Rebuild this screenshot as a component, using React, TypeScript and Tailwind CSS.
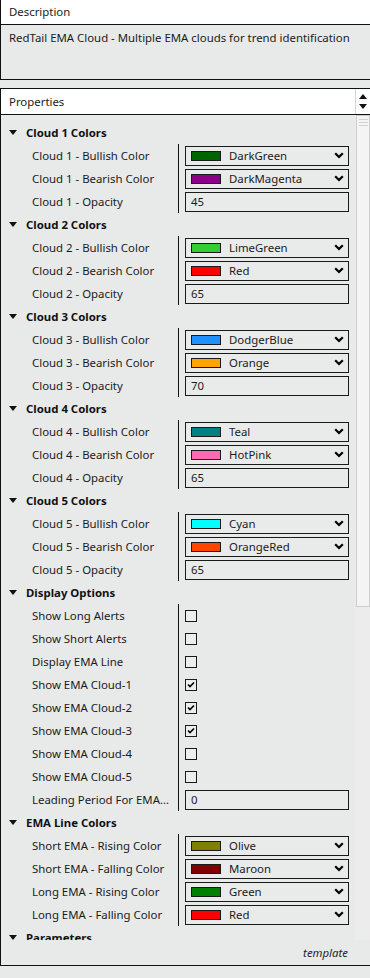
import { type ReactNode } from "react";

type Prop =
  | { kind: "color"; label: string; name: string; hex: string }
  | { kind: "text"; label: string; value: string }
  | { kind: "check"; label: string; checked: boolean };

type Group = { title: string; props: Prop[] };

const color = (label: string, name: string, hex: string): Prop => ({
  kind: "color",
  label,
  name,
  hex,
});
const text = (label: string, value: string): Prop => ({
  kind: "text",
  label,
  value,
});
const check = (label: string, checked: boolean): Prop => ({
  kind: "check",
  label,
  checked,
});

const cloud = (n: number, bull: [string, string], bear: [string, string], opacity: string): Group => ({
  title: `Cloud ${n} Colors`,
  props: [
    color(`Cloud ${n} - Bullish Color`, bull[0], bull[1]),
    color(`Cloud ${n} - Bearish Color`, bear[0], bear[1]),
    text(`Cloud ${n} - Opacity`, opacity),
  ],
});

const groups: Group[] = [
  cloud(1, ["DarkGreen", "#006400"], ["DarkMagenta", "#8b008b"], "45"),
  cloud(2, ["LimeGreen", "#32cd32"], ["Red", "#ff0000"], "65"),
  cloud(3, ["DodgerBlue", "#1e90ff"], ["Orange", "#ffa500"], "70"),
  cloud(4, ["Teal", "#008080"], ["HotPink", "#ff69b4"], "65"),
  cloud(5, ["Cyan", "#00ffff"], ["OrangeRed", "#ff4500"], "65"),
  {
    title: "Display Options",
    props: [
      check("Show Long Alerts", false),
      check("Show Short Alerts", false),
      check("Display EMA Line", false),
      check("Show EMA Cloud-1", true),
      check("Show EMA Cloud-2", true),
      check("Show EMA Cloud-3", true),
      check("Show EMA Cloud-4", false),
      check("Show EMA Cloud-5", false),
      text("Leading Period For EMA...", "0"),
    ],
  },
  {
    title: "EMA Line Colors",
    props: [
      color("Short EMA - Rising Color", "Olive", "#808000"),
      color("Short EMA - Falling Color", "Maroon", "#800000"),
      color("Long EMA - Rising Color", "Green", "#008000"),
      color("Long EMA - Falling Color", "Red", "#ff0000"),
    ],
  },
  {
    title: "Parameters",
    props: [],
  },
];

function Chevron() {
  return (
    <svg width="10" height="7" viewBox="0 0 10 7" className="shrink-0">
      <polyline points="1.2,1.2 5,5 8.8,1.2" fill="none" stroke="#000" strokeWidth="2.2" />
    </svg>
  );
}

function Box({ children }: { children: ReactNode }) {
  return (
    <div className="flex h-[20px] w-[164px] items-center border border-[#1a1a1a] bg-[#e9eaea] pl-[5px] pr-[4px]">
      {children}
    </div>
  );
}

function Value({ prop }: { prop: Prop }) {
  if (prop.kind === "check") {
    return (
      <div className="flex h-[12px] w-[12px] items-center justify-center border border-[#1a1a1a] bg-[#eceded]">
        {prop.checked && (
          <svg width="8" height="7" viewBox="0 0 8 7">
            <polyline points="1,3.5 3,5.5 7,1.5" fill="none" stroke="#000" strokeWidth="1.6" />
          </svg>
        )}
      </div>
    );
  }
  if (prop.kind === "text") {
    return (
      <Box>
        <span>{prop.value}</span>
      </Box>
    );
  }
  return (
    <Box>
      <span
        className="h-[10px] w-[30px] shrink-0 border border-[#1a1a1a]"
        style={{ backgroundColor: prop.hex }}
      />
      <span className="ml-[8px] flex-1">{prop.name}</span>
      <Chevron />
    </Box>
  );
}

function GroupRows({ group }: { group: Group }) {
  return (
    <div>
      <div className="flex h-[23px] items-center">
        <svg width="8" height="5" viewBox="0 0 8 5" className="ml-[8px]">
          <polygon points="0,0 8,0 4,5" fill="#111" />
        </svg>
        <span className="ml-[9px] font-bold text-[#111]">{group.title}</span>
      </div>
      {group.props.map((prop) => (
        <div key={prop.label} className="flex h-[23px] items-center">
          <div className="flex h-full w-[178px] shrink-0 items-center border-r border-[#111] pl-[31px] pr-[4px]">
            <span className="whitespace-nowrap">{prop.label}</span>
          </div>
          <div className="pl-[6px]">
            <Value prop={prop} />
          </div>
        </div>
      ))}
    </div>
  );
}

export default function App() {
  return (
    <div
      className="h-[978px] w-[370px] overflow-hidden bg-[#e8e9e9] text-[11.4px] leading-[16px] text-[#1b1b1b]"
      style={{ fontFamily: '"Segoe UI", "Noto Sans", sans-serif' }}
    >
      <section className="border-b border-l border-[#111]">
        <div className="flex h-[25px] items-center border-b border-[#111] bg-white pl-[8px]">
          Description
        </div>
        <div className="h-[54px] pl-[8px] pt-[5px]">
          RedTail EMA Cloud - Multiple EMA clouds for trend identification
        </div>
      </section>

      <section className="mt-[8px] border-y border-l border-[#111]">
        <div className="flex h-[26px] border-b border-[#111] bg-white">
          <div className="flex flex-1 items-center pl-[8px]">Properties</div>
          <div className="flex w-[15px] flex-col items-center justify-center gap-[5px] border-l border-[#d6d6d6]">
            <svg width="8" height="5" viewBox="0 0 8 5">
              <polygon points="4,0 8,5 0,5" fill="#111" />
            </svg>
            <svg width="8" height="5" viewBox="0 0 8 5">
              <polygon points="0,0 8,0 4,5" fill="#111" />
            </svg>
          </div>
        </div>

        <div className="flex h-[825px]">
          <div className="flex-1 overflow-hidden pt-[6px]">
            {groups.map((group) => (
              <GroupRows key={group.title} group={group} />
            ))}
          </div>
          <div className="w-[15px] bg-[#ececec] pl-[1px]">
            <div className="flex h-[492px] flex-col items-center gap-[2px] border border-[#cdcdcd] bg-[#f4f4f4] pt-[3px]">
              <div className="h-px w-[9px] bg-[#d2d2d2]" />
              <div className="h-px w-[9px] bg-[#d2d2d2]" />
              <div className="h-px w-[9px] bg-[#d2d2d2]" />
            </div>
          </div>
        </div>

        <div className="flex h-[25px] items-center justify-end pb-[2px] pr-[22px] pt-[2px] italic text-[#1c2536]">
          template
        </div>
      </section>
    </div>
  );
}
